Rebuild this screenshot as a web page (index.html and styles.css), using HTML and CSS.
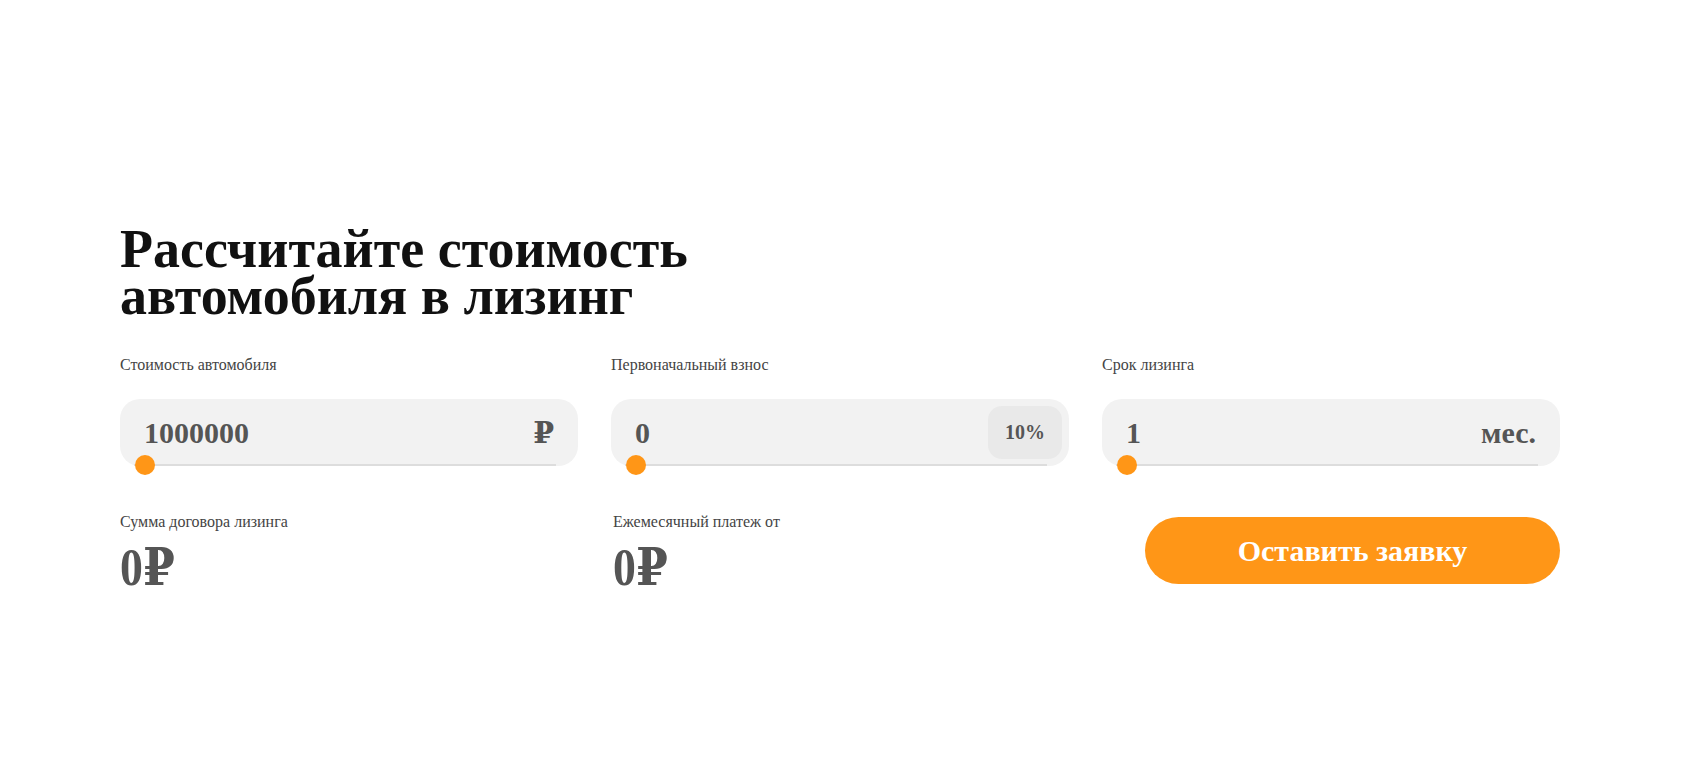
FILE: index.html
```html
<!DOCTYPE html>
<html lang="ru">
<head>
<meta charset="utf-8">
<title>Лизинг</title>
<link rel="stylesheet" href="styles.css">
</head>
<body>
<main class="calc">
  <h2 class="title">Рассчитайте стоимость<br>автомобиля в лизинг</h2>
  <div class="fields">
    <div class="field">
      <div class="label">Стоимость автомобиля</div>
      <div class="box">
        <span class="value">1000000</span>
        <span class="unit">₽</span>
        <div class="range"><span class="thumb"></span></div>
      </div>
    </div>
    <div class="field">
      <div class="label">Первоначальный взнос</div>
      <div class="box box-badge">
        <span class="value">0</span>
        <span class="badge">10%</span>
        <div class="range"><span class="thumb"></span></div>
      </div>
    </div>
    <div class="field">
      <div class="label">Срок лизинга</div>
      <div class="box">
        <span class="value">1</span>
        <span class="unit">мес.</span>
        <div class="range"><span class="thumb"></span></div>
      </div>
    </div>
  </div>
  <div class="results">
    <div class="result">
      <div class="label">Сумма договора лизинга</div>
      <div class="sum">0₽</div>
    </div>
    <div class="result">
      <div class="label">Ежемесячный платеж от</div>
      <div class="sum">0₽</div>
    </div>
    <button class="submit">Оставить заявку</button>
  </div>
</main>
</body>
</html>
```
FILE: styles.css
```css
html, body {
  margin: 0;
  padding: 0;
  background: #fff;
}
body {
  font-family: "Liberation Serif", "DejaVu Serif", "Times New Roman", serif;
  color: #444;
}
.calc {
  width: 1440px;
  margin-left: 120px;
  padding-top: 226px;
}
.title {
  margin: 0;
  font-size: 54px;
  line-height: 47px;
  font-weight: 700;
  color: #111;
}
.fields {
  display: grid;
  grid-template-columns: repeat(3, 458px);
  column-gap: 33px;
  margin-top: 36px;
}
.label {
  font-size: 16px;
  line-height: 18px;
  color: #444;
}
.box {
  position: relative;
  margin-top: 25px;
  height: 67px;
  box-sizing: border-box;
  background: #f2f2f2;
  border-radius: 20px;
  display: flex;
  align-items: center;
  justify-content: space-between;
  padding: 0 24px 0 24px;
  color: #555;
  font-weight: 700;
  font-size: 30px;
}
.box-badge {
  padding-right: 7px;
}
.value, .unit {
  line-height: 1;
}
.badge {
  width: 74px;
  height: 53px;
  border-radius: 14px;
  background: #e9e9e9;
  display: flex;
  align-items: center;
  justify-content: center;
  font-size: 20px;
  color: #555;
}
.range {
  position: absolute;
  left: 14px;
  right: 22px;
  bottom: 0;
  height: 2px;
  background: #dddddd;
}
.thumb {
  position: absolute;
  left: 1px;
  top: -9px;
  width: 20px;
  height: 20px;
  border-radius: 50%;
  background: #ff9617;
}
.results {
  display: grid;
  grid-template-columns: 493px 493px 1fr;
  margin-top: 47px;
  align-items: start;
}
.sum {
  margin-top: 11px;
  font-size: 52px;
  line-height: 52px;
  font-weight: 700;
  color: #555;
  transform: scaleX(0.88);
  transform-origin: left center;
}
.submit {
  justify-self: end;
  width: 415px;
  height: 67px;
  margin-top: 4px;
  border: 0;
  border-radius: 34px;
  background: #ff9617;
  color: #fff;
  font-family: "Liberation Serif", "Times New Roman", serif;
  font-weight: 700;
  font-size: 30px;
  cursor: pointer;
}
```
